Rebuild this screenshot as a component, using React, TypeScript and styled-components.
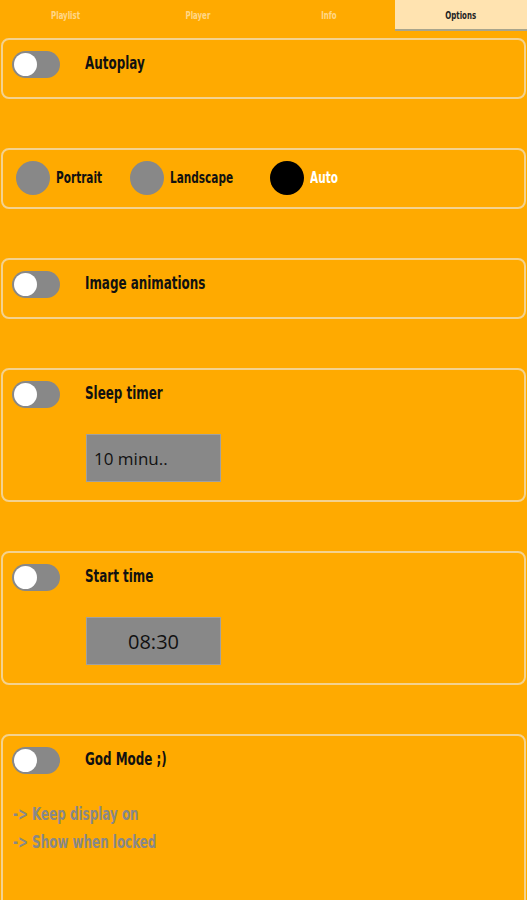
import styled, { createGlobalStyle } from "styled-components";

const ORANGE = "#ffaa00";
const GREY = "#888888";
const LINE = "#f4d28e";
const NARROW = `"Liberation Sans Narrow", "DejaVu Sans Condensed", "Liberation Sans", sans-serif`;

const GlobalStyle = createGlobalStyle`
  html, body {
    margin: 0;
    padding: 0;
    background: ${ORANGE};
  }
  body {
    font-family: ${NARROW};
  }
`;

const tabs = ["Playlist", "Player", "Info", "Options"];

const App = () => {
  return (
    <>
      <GlobalStyle />
      <Page>
        <TabBar>
          {tabs.map((t) => (
            <Tab key={t} $active={t === "Options"}>
              <TabText>{t}</TabText>
            </Tab>
          ))}
        </TabBar>

        <Card>
          <Row>
            <Toggle />
            <Label>Autoplay</Label>
          </Row>
        </Card>

        <Card>
          <RadioRow>
            <RadioItem $width={114}>
              <RadioDot />
              <RadioLabel>Portrait</RadioLabel>
            </RadioItem>
            <RadioItem $width={140}>
              <RadioDot />
              <RadioLabel>Landscape</RadioLabel>
            </RadioItem>
            <RadioItem>
              <RadioDot $checked />
              <RadioLabel $checked>Auto</RadioLabel>
            </RadioItem>
          </RadioRow>
        </Card>

        <Card>
          <Row>
            <Toggle />
            <Label>Image animations</Label>
          </Row>
        </Card>

        <Card>
          <Row>
            <Toggle />
            <Label>Sleep timer</Label>
          </Row>
          <Field>10 minu..</Field>
        </Card>

        <Card>
          <Row>
            <Toggle />
            <Label>Start time</Label>
          </Row>
          <Field $center>08:30</Field>
        </Card>

        <Card $last>
          <Row>
            <Toggle />
            <Label>God Mode ;)</Label>
          </Row>
          <Notes>
            <Note>-&gt; Keep display on</Note>
            <Note>-&gt; Show when locked</Note>
          </Notes>
        </Card>
      </Page>
    </>
  );
};

export default App;

const Page = styled.div`
  width: 527px;
  min-height: 900px;
  background: ${ORANGE};
  display: flex;
  flex-direction: column;
  gap: 49px;
  overflow: hidden;
`;

const TabBar = styled.div`
  display: grid;
  grid-template-columns: repeat(4, 1fr);
  height: 31px;
  margin-bottom: -42px;
`;

const Tab = styled.div<{ $active?: boolean }>`
  display: flex;
  align-items: center;
  justify-content: center;
  font-family: ${NARROW};
  font-weight: bold;
  font-size: 10px;
  color: ${(p) => (p.$active ? "#222" : "rgba(255, 255, 255, 0.55)")};
  background: ${(p) => (p.$active ? "#ffe3b0" : "transparent")};
  border-bottom: 2px solid ${(p) => (p.$active ? "#a9a58c" : "transparent")};
  padding-top: 1px;
`;

const Narrow = styled.span`
  display: inline-block;
  transform: scaleX(0.78);
  transform-origin: left center;
  white-space: nowrap;
`;

const TabText = styled(Narrow)`
  transform-origin: center center;
`;

const Card = styled.div<{ $last?: boolean }>`
  margin: 0 1px;
  border: 2px solid ${LINE};
  border-radius: 8px;
  padding: 9px 9px 18px;
  min-height: ${(p) => (p.$last ? "190px" : "auto")};
  display: flex;
  flex-direction: column;
  box-sizing: border-box;
`;

const Row = styled.div`
  display: flex;
  align-items: center;
  gap: 25px;
  height: 30px;
`;

const Toggle = styled.div`
  position: relative;
  width: 48px;
  height: 27px;
  border-radius: 14px;
  background: ${GREY};
  flex-shrink: 0;

  &::after {
    content: "";
    position: absolute;
    left: 2px;
    top: 2px;
    width: 23px;
    height: 23px;
    border-radius: 50%;
    background: #fff;
  }
`;

const Label = styled(Narrow)`
  font-family: ${NARROW};
  font-weight: bold;
  font-size: 17px;
  color: #111;
  margin-top: -2px;
`;

const RadioRow = styled.div`
  display: flex;
  align-items: center;
  height: 38px;
  margin: 0 0 -8px 4px;
`;

const RadioItem = styled.div<{ $width?: number }>`
  display: flex;
  align-items: center;
  gap: 6px;
  width: ${(p) => (p.$width ? `${p.$width}px` : "auto")};
`;

const RadioDot = styled.div<{ $checked?: boolean }>`
  width: 34px;
  height: 34px;
  border-radius: 50%;
  background: ${(p) => (p.$checked ? "#000" : GREY)};
  flex-shrink: 0;
`;

const RadioLabel = styled(Narrow)<{ $checked?: boolean }>`
  font-family: ${NARROW};
  font-weight: bold;
  font-size: 15px;
  color: ${(p) => (p.$checked ? "#fff" : "#111")};
`;

const Field = styled.div<{ $center?: boolean }>`
  margin: 25px 0 0 74px;
  width: 135px;
  height: 48px;
  box-sizing: border-box;
  background: ${GREY};
  border: 1px solid #a0a0a0;
  display: flex;
  align-items: center;
  justify-content: ${(p) => (p.$center ? "center" : "flex-start")};
  padding: 0 7px;
  font-family: "Open Sans", "Noto Sans", sans-serif;
  font-size: ${(p) => (p.$center ? "20px" : "17px")};
  color: #111;
`;

const Notes = styled.div`
  display: flex;
  flex-direction: column;
  gap: 8px;
  margin-top: 29px;
`;

const Note = styled(Narrow)`
  font-family: ${NARROW};
  font-weight: bold;
  font-size: 17px;
  color: ${GREY};
  margin-left: 1px;
`;
